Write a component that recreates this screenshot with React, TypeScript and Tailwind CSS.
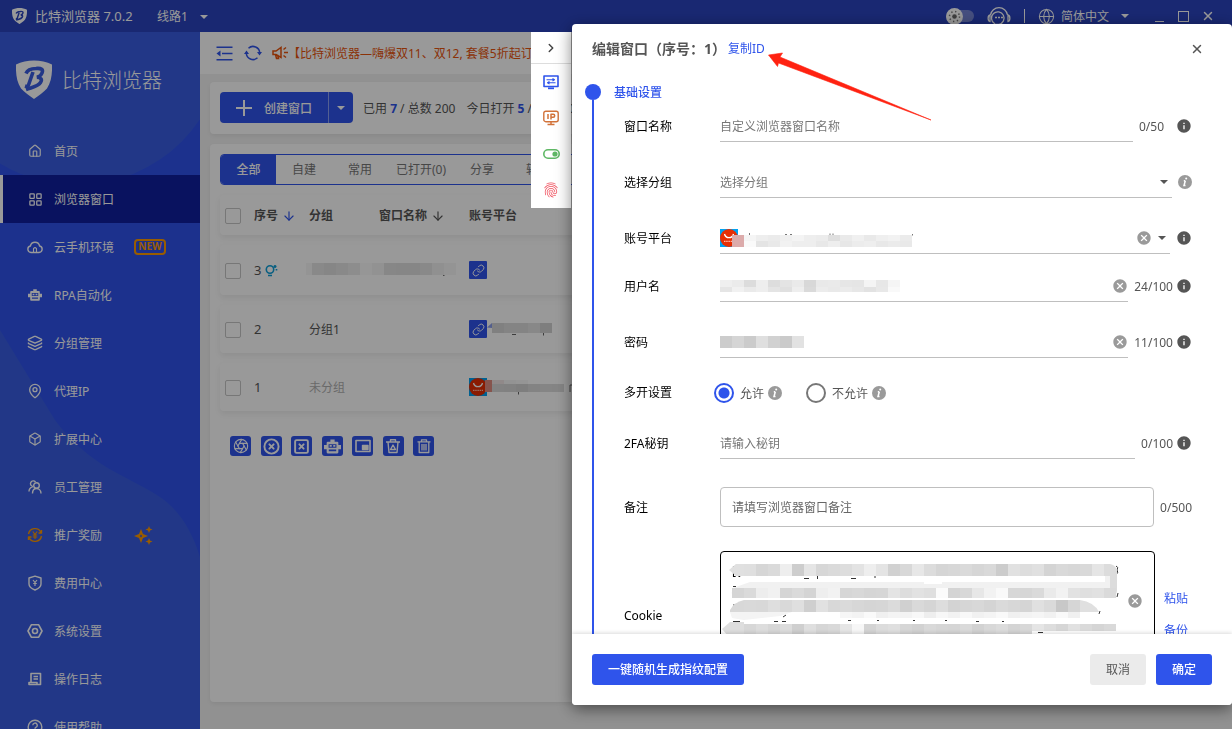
import { useState, type ReactNode } from "react";
import {
  Aperture,
  ArrowDown,
  Box,
  ChevronRight,
  CircleX,
  Globe,
  House,
  Layers,
  LayoutGrid,
  Link,
  MapPin,
  SquareX,
  X,
} from "lucide-react";
import { MdCancel, MdFingerprint, MdInfo } from "react-icons/md";

/* ---------- small drawings ---------- */

const Svg = ({ size = 16, className, children }: { size?: number; className?: string; children: ReactNode }) => (
  <svg
    width={size}
    height={size}
    viewBox="0 0 16 16"
    fill="none"
    stroke="currentColor"
    strokeWidth="1.4"
    strokeLinejoin="round"
    className={className}
    aria-hidden="true"
  >
    {children}
  </svg>
);

const Logo = ({ className, hole }: { className: string; hole: string }) => (
  <svg viewBox="0 0 36 38" className={className} aria-hidden="true">
    <path d="M18 0C24 0 31 1.200 36 4C36.300 13 35.500 21 31 28C27.500 32 22.500 35 18 38.500C13.500 35 8.500 32 5 28C0.500 21 -0.300 13 0 4C5 1.200 12 0 18 0Z" fill="#fff" />
    <path
      d="M10 13C11.500 9 16 8 20 8C25.500 7.500 27.500 9 26 12.500C25.200 14.800 23.500 16 21 16.800C25 17 26.500 19 24.500 22C22 26 17 26.500 10 29M17 11.500L12.500 24.500C12 26 10.500 26 9 25.500"
      fill="none"
      stroke={hole}
      strokeWidth="3.600"
    />
  </svg>
);

const Caret = ({ className }: { className?: string }) => (
  <svg width="8" height="4" viewBox="0 0 8 4" className={className} aria-hidden="true">
    <path d="M0 0h8L4 4z" fill="currentColor" />
  </svg>
);

const RobotIcon = ({ size = 16 }: { size?: number }) => (
  <svg width={size} height={size} viewBox="0 0 16 16" fill="currentColor" aria-hidden="true">
    <path
      fillRule="evenodd"
      d="M6 1.500h4v2h2.500q1 0 1 1V6.500H16v4h-2.500v3q0 1-1 1h-9q-1 0-1-1v-3H0v-4h2.500V4.500q0-1 1-1H6zM4.300 5.800v3.400h7.400V5.800zM4.500 10.800v1.600h7v-1.600z"
    />
    <path d="M5.300 6.700h2v1.600h-2zM8.700 6.700h2v1.600h-2z" />
  </svg>
);

const CloudHomeIcon = () => (
  <Svg>
    <path d="M4 13.500a3.300 3.300 0 0 1-.6-6.500 4.700 4.700 0 0 1 9.200 0 3.300 3.300 0 0 1-.6 6.500z" />
    <path d="M6.500 13.500V9.500L8 8.500l1.500 1v4" strokeWidth="1.100" />
  </Svg>
);

const StaffIcon = () => (
  <Svg>
    <circle cx="9.500" cy="6.500" r="2.800" />
    <path d="M5.500 14.500c0-3 1.500-5 4-5s4.500 2 4.500 5M6 7.500A2.800 2.800 0 1 1 8.500 3M2 12.500c0-2.500 1-4 3.500-4.700" />
  </Svg>
);

const YenCycleIcon = () => (
  <Svg>
    <path d="M1.500 7A6.600 6.600 0 0 1 14 5.500M14.500 9A6.600 6.600 0 0 1 2 10.500M14.500 3v3h-3M1.500 13v-3h3" />
    <path d="M5.800 4.500L8 7.500l2.200-3M8 7.500V12M5.800 8h4.400M5.800 10h4.400" strokeWidth="1.100" />
  </Svg>
);

const ShieldYenIcon = () => (
  <Svg>
    <path d="M8 1.200L14 3v6c0 3-3 4.800-6 6-3-1.200-6-3-6-6V3z" />
    <path d="M6 5l2 2.500L10 5M8 7.500V11M6.200 8.500h3.600" strokeWidth="1.200" />
  </Svg>
);

const NutIcon = () => (
  <Svg>
    <path d="M4.300 1.800h7.400L15 8l-3.300 6.200H4.300L1 8z" strokeWidth="1.600" />
    <circle cx="8" cy="8" r="2.500" strokeWidth="1.600" />
  </Svg>
);

const LogIcon = () => (
  <Svg>
    <path d="M4 11V2.500h9.500v11H4M6.500 5.500H11M6.500 8H11M2 13.500V11.500h8v2z" strokeWidth="1.600" />
  </Svg>
);

const HelpIcon = () => (
  <Svg>
    <circle cx="8" cy="8" r="6.800" />
    <path d="M5.800 6.300a2.200 2.200 0 1 1 3.300 1.900c-.8.4-1.100.8-1.100 1.600M8 11v1.500" />
  </Svg>
);

const SparkleIcon = () => (
  <svg width="19" height="19" viewBox="0 0 19 19" fill="#ff9900" aria-hidden="true">
    <path fillRule="evenodd" d="M7 3l2 5 5 2-5 2-2 5-2-5-5-2 5-2zM7 8.500L5.800 10 7 11.500 8.200 10z" />
    <path d="M15 0l1 2.500L18.500 3.500 16 4.500 15 7l-1-2.500-2.500-1L14 2.500zM15 12l1 2.500 2.500 1-2.500 1-1 2.500-1-2.500-2.500-1 2.500-1z" />
  </svg>
);

const IndentIcon = () => (
  <svg width="17" height="15" viewBox="0 0 17 15" fill="none" stroke="#2f54eb" strokeWidth="1.600" aria-hidden="true">
    <path d="M0.500 1.200h16M6 7.500h10.500M0.500 13.800h16" />
    <path d="M4.500 4.500v6L0.500 7.500z" fill="#2f54eb" stroke="none" />
  </svg>
);

const RefreshIcon = () => (
  <svg width="18" height="16" viewBox="0 0 18 16" fill="none" stroke="#2f54eb" strokeWidth="1.500" aria-hidden="true">
    <path d="M4.500 3.200A6.700 6.700 0 0 1 15.700 8M2.300 8A6.700 6.700 0 0 0 13.500 12.800" />
    <path d="M13 7h5l-2.500 3.500zM0 9h5L2.500 5.500z" fill="#2f54eb" stroke="none" />
  </svg>
);

const MegaphoneIcon = () => (
  <svg width="16" height="14" viewBox="0 0 16 14" fill="none" stroke="#e8540c" strokeWidth="1.500" aria-hidden="true">
    <path d="M1 5h3l5-3.500v10L4 8.500H1zM3.500 8.500l1 4h2l-1-3.500M11.500 3.500L14 1.500M12 6.500h4M11.500 9.500l2.500 2" />
  </svg>
);

const HeadsetIcon = () => (
  <svg width="24" height="18" viewBox="0 0 24 18" fill="none" stroke="#fff" strokeWidth="1.300" aria-hidden="true">
    <path d="M3.500 8a8.600 8.600 0 0 1 17 0M3 8v6.500C.5 14 .5 8.500 3 8zM21 8v6.500c2.500-.5 2.500-6 0-6.500z" />
    <path d="M7.500 16.500A6.300 6.300 0 1 1 12 17.300H7.500z" />
    <path d="M8 10.500h2M11 10.500h2M14 10.500h2" strokeWidth="1.600" />
  </svg>
);

const PlatformLogo = () => (
  <g>
    <rect width="18" height="18" fill="#00a2f2" />
    <circle cx="9" cy="9" r="9" fill="#e62e04" />
    <path d="M4.500 5a4.600 4.600 0 0 0 9 0" fill="none" stroke="#fff" strokeWidth="1.300" />
    <path d="M4 12.300h10" stroke="#ffb8a8" strokeWidth="1.200" strokeDasharray="1.500 .7" />
  </g>
);

const ItalicInfo = () => (
  <svg width="14" height="14" viewBox="0 0 14 14" aria-hidden="true">
    <circle cx="7" cy="7" r="7" fill="#9a9a9a" />
    <path d="M7.300 5.800L6 10.500h1.500M5.800 5.800h1.500" stroke="#fff" strokeWidth="1.500" fill="none" />
    <circle cx="8.200" cy="3.500" r="1" fill="#fff" />
  </svg>
);

/* Row of grey tiles that hides private values */
const Tiles = ({ x = 0, y = 0, w = 12, h = 12, colors }: { x?: number; y?: number; w?: number; h?: number; colors: string[] }) => (
  <g>
    {colors.map((c, i) => (
      <rect key={i} x={x + i * w} y={y} width={w} height={h} fill={c} />
    ))}
  </g>
);

/* ---------- sidebar ---------- */

const menu = [
  { label: "首页", icon: <House size={14} /> },
  { label: "浏览器窗口", icon: <LayoutGrid size={15} />, active: true },
  { label: "云手机环境", icon: <CloudHomeIcon />, badge: "new" },
  { label: "RPA自动化", icon: <RobotIcon size={14} /> },
  { label: "分组管理", icon: <Layers size={16} /> },
  { label: "代理IP", icon: <MapPin size={16} /> },
  { label: "扩展中心", icon: <Box size={14} /> },
  { label: "员工管理", icon: <StaffIcon /> },
  { label: "推广奖励", icon: <YenCycleIcon />, badge: "spark" },
  { label: "费用中心", icon: <ShieldYenIcon /> },
  { label: "系统设置", icon: <NutIcon /> },
  { label: "操作日志", icon: <LogIcon /> },
  { label: "使用帮助", icon: <HelpIcon /> },
];

const Sidebar = () => (
  <aside className="relative w-[200px] shrink-0 overflow-hidden bg-[#2f53ec] text-white">
    <svg className="absolute left-0 top-0" width="200" height="697" viewBox="0 32 200 697" aria-hidden="true">
      <circle cx="77" cy="37" r="148" fill="#395de2" />
      <path d="M0 330L55 420C70 440 84 452 100 463C120 476 140 484 160 497C178 509 192 530 200 557V729H0Z" fill="#395de2" />
    </svg>
    <div className="relative flex h-[95px] items-center gap-[10px] pl-4">
      <Logo className="h-[39px] w-9" hole="#395de2" />
      <span className="pt-0.5 text-xl font-light">比特浏览器</span>
    </div>
    <nav className="relative">
      {menu.map((item) => (
        <a
          key={item.label}
          href="#"
          className={
            item.active
              ? "flex h-12 items-center border-l-[3px] border-white bg-[#101f9e] pl-6"
              : "flex h-12 items-center border-l-[3px] border-transparent pl-6"
          }
        >
          <span className={item.badge === "spark" ? "flex w-4 justify-center text-[#ff9900]" : "flex w-4 justify-center"}>
            {item.icon}
          </span>
          <span className="ml-[11px] w-20 pt-0.5">{item.label}</span>
          {item.badge === "new" && (
            <span className="flex h-4 w-8 items-center justify-center rounded-sm border-2 border-[#ff9900] text-[10px] font-bold text-[#ff9900]">
              NEW
            </span>
          )}
          {item.badge === "spark" && <SparkleIcon />}
        </a>
      ))}
    </nav>
  </aside>
);

/* ---------- title bar ---------- */

const TitleBar = () => (
  <header className="flex h-8 shrink-0 items-center bg-[#2a43be] pl-3 pr-[17px] text-white">
    <Logo className="h-4 w-[15px]" hole="#2a43be" />
    <span className="ml-2 w-[122px] pt-0.5 text-[13px]">比特浏览器 7.0.2</span>
    <button className="flex items-center gap-3 pt-0.5">
      线路1 <Caret />
    </button>
    <div className="ml-auto flex items-center">
      <button aria-label="主题" className="flex h-3 w-7 items-center rounded-full bg-[#7484d4]">
        <svg width="17" height="17" viewBox="0 0 17 17" className="shrink-0" aria-hidden="true">
          <circle cx="8.500" cy="8.500" r="8.500" fill="#fff" />
          <circle cx="8.500" cy="8.500" r="2.300" fill="#666" />
          <circle cx="8.500" cy="8.500" r="5" fill="none" stroke="#777" strokeWidth="1.500" strokeDasharray="1.300 2.630" />
        </svg>
      </button>
      <button aria-label="客服" className="ml-[13px]">
        <HeadsetIcon />
      </button>
      <span className="mx-[13px] h-[14px] w-px bg-white" />
      <button className="flex items-center">
        <Globe size={17} strokeWidth={1.5} />
        <span className="ml-1.5 pt-0.5">简体中文</span>
        <Caret className="ml-3" />
      </button>
      <button aria-label="最小化" className="ml-[26px] flex h-[11px] w-[9px] items-end">
        <span className="h-px w-full bg-white" />
      </button>
      <button aria-label="最大化" className="ml-[14px] h-[11px] w-[11px] border border-white" />
      <button aria-label="关闭窗口" className="ml-3">
        <X size={14} strokeWidth={2.5} />
      </button>
    </div>
  </header>
);

/* ---------- browser list ---------- */

const tabs = ["全部", "自建", "常用", "已打开(0)", "分享", "转移"];

const bulkActions = [
  { label: "打开", icon: <Aperture size={16} strokeWidth={1.7} /> },
  { label: "关闭", icon: <CircleX size={17} strokeWidth={2.7} /> },
  { label: "强制关闭", icon: <SquareX size={17} strokeWidth={2.7} /> },
  { label: "RPA", icon: <RobotIcon size={17} /> },
  {
    label: "排列",
    icon: (
      <Svg>
        <path d="M1 2.500h14v11H1z" strokeWidth="1.600" />
        <path d="M7.500 7.500H13v4H7.500z" fill="currentColor" />
      </Svg>
    ),
  },
  {
    label: "清理",
    icon: (
      <Svg>
        <path d="M1 4h14M5.500 4V1.800h5V4M3 4l1 10.500h8L13 4M8 7l2.500 4.500h-5z" />
      </Svg>
    ),
  },
  {
    label: "删除",
    icon: (
      <Svg>
        <path d="M1.500 3.800h13M5.500 3.800V1.800h5v2M3.200 3.800v10.700h9.600V3.800M6 6v6.500M8 6v6.500M10 6v6.500" strokeWidth="1.300" />
      </Svg>
    ),
  },
];

const LinkBadge = () => (
  <span className="flex h-[18px] w-[18px] items-center justify-center rounded-[1px] bg-[#2f54eb] text-white">
    <Link size={13} strokeWidth={1.8} />
  </span>
);

const RowCheck = ({ label }: { label: string }) => (
  <input
    type="checkbox"
    aria-label={label}
    className="block h-4 w-4 appearance-none rounded-xs border border-[#c6c6c6]"
  />
);

const rowClass = "rounded shadow-[0_3px_6px_rgba(0,0,0,0.07)]";

const BrowserTable = () => (
  <table className="w-full table-fixed border-separate border-spacing-x-0 border-spacing-y-[10px] text-left text-[#555]">
    <colgroup>
      <col className="w-[34px]" />
      <col className="w-[52px]" />
      <col className="w-[70px]" />
      <col className="w-[90px]" />
      <col />
    </colgroup>
    <thead>
      <tr className={rowClass}>
        <th className="h-10 pl-[5px] pt-0.5">
          <RowCheck label="全选" />
        </th>
        <th className="pt-0.5 font-bold">
          <span className="flex items-center gap-1">
            序号 <ArrowDown size={14} className="text-[#2f54eb]" />
          </span>
        </th>
        <th className="pl-[3px] pt-0.5 font-bold">分组</th>
        <th className="pl-[3px] pt-0.5 font-bold">
          <span className="flex items-center gap-1">
            窗口名称 <ArrowDown size={14} />
          </span>
        </th>
        <th className="pl-[3px] pt-0.5 font-bold">账号平台</th>
      </tr>
    </thead>
    <tbody>
      <tr className={rowClass}>
        <td className="h-[50px] pl-[5px] pt-0.5">
          <RowCheck label="3" />
        </td>
        <td className="pt-0.5">
          <span className="flex items-center gap-1 text-[13px]">
            3
            <svg width="13" height="13" viewBox="0 0 13 13" fill="none" stroke="#0f9fd8" strokeWidth="1.600" aria-hidden="true">
              <circle cx="5" cy="5.500" r="3.700" />
              <path d="M3 11.500h4M10 1v3M8.500 2.500h3M11.500 5v1.500" />
            </svg>
          </span>
        </td>
        <td colSpan={2}>
          <svg width="150" height="14" aria-hidden="true">
            <Tiles x={0} w={6} colors={["#f7f7f7"]} />
            <Tiles x={6} colors={["#e4e4e4", "#e0e0e0", "#e4e4e4", "#ebebeb", "#fafafa", "#f3f3f3", "#e2e2e2", "#e0e0e0", "#dfdfdf", "#e4e4e4", "#f0f0f0", "#f7f7f7"]} />
            <path d="M137 12.500h1.500" stroke="#777" />
          </svg>
        </td>
        <td className="pl-[3px]">
          <LinkBadge />
        </td>
      </tr>
      <tr className={rowClass}>
        <td className="h-12 pl-[5px] pt-0.5">
          <RowCheck label="2" />
        </td>
        <td className="pt-0.5 text-[13px]">2</td>
        <td className="pl-[3px] pt-0.5">分组1</td>
        <td />
        <td className="pl-[3px]">
          <span className="flex items-center">
            <LinkBadge />
            <svg width="66" height="14" aria-hidden="true">
              <path d="M0 5.500L5 1v5z" fill="#8d9eea" />
              <Tiles x={5} y={1} h={10} colors={["#d6d6d6", "#dddddd", "#dcdcdc", "#e3e3e3", "#d3d3d3"]} />
              <path d="M25 12.500h4M56.500 11v2.500" stroke="#666" />
            </svg>
          </span>
        </td>
      </tr>
      <tr className={rowClass}>
        <td className="h-12 pl-[5px] pt-0.5">
          <RowCheck label="1" />
        </td>
        <td className="pt-0.5 text-[13px]">1</td>
        <td className="pl-[3px] pt-0.5 text-[#b0b0b0]">未分组</td>
        <td />
        <td className="pl-[3px]">
          <svg width="110" height="18" aria-hidden="true">
            <PlatformLogo />
            <Tiles x={16} y={2} w={7} colors={["#e08c80"]} />
            <Tiles x={23} y={2} h={4} colors={["#f0e5e5", "#f5f5f5", "#f8f8f8"]} />
            <Tiles x={23} y={6} h={8} colors={["#d9d9d9", "#d7d7d7", "#d2d2d2", "#dadada", "#dedede", "#dddddd"]} />
            <rect x="95" y="2" width="5" height="12" fill="#fff" />
            <path d="M49.500 14v2.500M101 14V7h4" stroke="#666" fill="none" />
          </svg>
        </td>
      </tr>
    </tbody>
  </table>
);

const MainPage = () => (
  <main className="flex min-w-0 flex-1 flex-col bg-[#f2f2f2] text-[#555]">
    <div className="flex h-[42px] shrink-0 items-center whitespace-nowrap bg-white pl-4">
      <button aria-label="收起菜单">
        <IndentIcon />
      </button>
      <button aria-label="刷新" className="ml-[11px]">
        <RefreshIcon />
      </button>
      <span className="ml-[10px] flex items-center text-[#e8540c]">
        <MegaphoneIcon />
        <span className="pt-0.5">【比特浏览器—嗨爆双11、双12, 套餐5折起订购】</span>
      </span>
    </div>

    <section className="mx-[10px] mt-2 flex shrink-0 items-center whitespace-nowrap rounded bg-white p-[10px] pb-[11px] shadow-[0_2px_4px_rgba(0,0,0,0.06)]">
      <div className="flex h-[31px] rounded bg-[#2f54eb] text-white">
        <button className="flex w-[108px] items-center gap-[11px] pl-[15px] font-medium">
          <svg width="18" height="18" viewBox="0 0 18 18" stroke="#fff" strokeWidth="2" aria-hidden="true">
            <path d="M9 1v16M1 9h16" />
          </svg>
          <span className="pt-0.5">创建窗口</span>
        </button>
        <button aria-label="更多" className="flex w-[25px] items-center justify-center border-l border-[#8ca0f3]">
          <Caret />
        </button>
      </div>
      <span className="ml-[10px] pt-0.5">
        已用 <b className="text-[#2f54eb]">7</b> / 总数 200
      </span>
      <span className="ml-[11px] pt-0.5">
        今日打开 <b className="text-[#2f54eb]">5</b> / 总数 50
      </span>
    </section>

    <section className="mx-[10px] mb-[27px] mt-[10px] flex-1 rounded bg-white p-[10px] shadow-[0_2px_4px_rgba(0,0,0,0.06)]">
      <div className="flex h-[31px] overflow-hidden rounded border border-[#2f54eb]">
        {tabs.map((tab, i) => (
          <button
            key={tab}
            className={
              i === 0
                ? "w-[55px] bg-[#2f54eb] font-medium text-white"
                : tab.length > 2
                  ? "px-2 text-[#777]"
                  : "w-14 text-[#777]"
            }
          >
            {tab}
          </button>
        ))}
      </div>
      <BrowserTable />
      <div className="ml-[10px] mt-[15px] flex w-[204px] justify-between">
        {bulkActions.map((action) => (
          <button
            key={action.label}
            aria-label={action.label}
            className="flex h-5 w-[21px] items-center justify-center rounded-[3px] bg-[#2f54eb] text-white"
          >
            {action.icon}
          </button>
        ))}
      </div>
    </section>
  </main>
);

/* ---------- edit dialog ---------- */

const SideTools = () => (
  <div className="mr-px mt-2 flex h-44 w-10 shrink-0 flex-col items-center bg-white">
    <button aria-label="收起" className="flex h-8 w-full items-center justify-center border-b border-[#ddd] text-[#444]">
      <ChevronRight size={14} strokeWidth={2.5} />
    </button>
    <button aria-label="基础设置" className="flex h-9 items-center text-[#2f54eb]">
      <Svg>
        <path d="M1 2h14v10.500H1z" strokeWidth="1.600" />
        <path d="M3.500 5.800h8M4.500 8.800h8M9.500 4.500l2 1.300-2 1.300M6.500 7.500l-2 1.300 2 1.300" strokeWidth="1.100" />
        <path d="M5 14.300h6" strokeWidth="1.800" />
      </Svg>
    </button>
    <button aria-label="代理IP" className="flex h-9 items-center text-[#d2733a]">
      <Svg>
        <rect x="0.800" y="1.200" width="14.400" height="10.500" rx="2" />
        <path d="M5 4v5M8 9.500V4.300h2.200a1.500 1.500 0 0 1 0 3H8M8 12v2.500M4.500 14.500h7" strokeWidth="1.500" />
      </Svg>
    </button>
    <button aria-label="开关" className="flex h-9 items-center text-[#5fb865]">
      <svg width="17" height="10" viewBox="0 0 17 10" aria-hidden="true">
        <rect x="0.800" y="0.800" width="15.400" height="8.400" rx="4.200" fill="none" stroke="currentColor" strokeWidth="1.600" />
        <circle cx="12" cy="5" r="2.600" fill="currentColor" />
      </svg>
    </button>
    <button aria-label="指纹" className="flex h-9 items-center text-[#f0525f]">
      <MdFingerprint size={18} />
    </button>
  </div>
);

const Row = ({ label, id, className, children }: { label: string; id: string; className: string; children: ReactNode }) => (
  <div className={`flex items-center ${className}`}>
    <label htmlFor={id} className="w-24 shrink-0 pt-0.5 text-black">
      {label}
    </label>
    {children}
  </div>
);

const line = "flex h-8 min-w-0 flex-1 items-center border-b border-[#bfbfbf]";
const input = "h-full min-w-0 flex-1 bg-transparent pt-0.5 text-[#555] outline-none placeholder:text-[#777]";

const Clear = () => (
  <button aria-label="清除" className="block shrink-0 text-[#9a9a9a]">
    <MdCancel size={16} />
  </button>
);

const Info = () => <MdInfo size={16} className="shrink-0 text-[#555]" />;

const EditDialog = () => {
  const [multi, setMulti] = useState("allow");
  const radio =
    "relative h-5 w-5 shrink-0 appearance-none rounded-full border-2 border-[#777] checked:border-[#2f54eb] checked:bg-[radial-gradient(circle,#2f54eb_5px,transparent_6px)]";

  return (
    <div
      role="dialog"
      aria-label="编辑窗口"
      className="relative flex w-[660px] flex-col overflow-hidden rounded bg-white text-[#555] shadow-[0_4px_16px_rgba(0,0,0,0.5)]"
    >
      <div className="flex h-[50px] shrink-0 items-center pl-5 pr-7">
        <h2 className="text-sm font-bold">编辑窗口（序号：1）</h2>
        <a href="#" className="ml-0.5 text-[#2f54eb]">
          复制ID
        </a>
        <button aria-label="关闭" className="ml-auto">
          <X size={14} strokeWidth={2.5} />
        </button>
      </div>

      <div className="flex min-h-0 flex-1 overflow-y-auto pl-[13px] pr-10 pt-[10px] [scrollbar-width:none]">
        {/* timeline */}
        <div className="flex h-[620px] w-4 flex-col items-center">
          <span className="h-4 w-4 shrink-0 rounded-full bg-[#2f54eb]" />
          <span className="w-0.5 flex-1 bg-[#2f54eb]" />
        </div>
        <form className="ml-[13px] min-w-0 flex-1" onSubmit={(e) => e.preventDefault()}>
          <h3 className="h-4 font-medium leading-[18px] text-[#2f54eb]">基础设置</h3>
          <div className="pl-[10px]">
            <Row label="窗口名称" id="name" className="mt-[10px]">
              <div className={line}>
                <input id="name" className={input} placeholder="自定义浏览器窗口名称" />
              </div>
              <span className="ml-1.5 mr-3 pt-0.5">0/50</span>
              <Info />
            </Row>
            <Row label="选择分组" id="group" className="mt-6">
              <div className={line}>
                <select id="group" className="h-full min-w-0 flex-1 appearance-none bg-transparent pt-0.5 text-[#777] outline-none">
                  <option>选择分组</option>
                </select>
                <Caret className="mr-1" />
              </div>
              <span className="ml-1.5">
                <ItalicInfo />
              </span>
            </Row>
            <Row label="账号平台" id="platform" className="mt-6">
              <div className={line}>
                <svg width="200" height="18" className="shrink-0" aria-hidden="true">
                  <PlatformLogo />
                  <path d="M29.500 4v2M65 5.500h2M70 5.500h2M110 4.500v1.500M113 4.500v1.500M192.500 5v1.500" stroke="#777" />
                  <Tiles x={12} y={6} colors={["#dcabab"]} />
                  <Tiles x={24} y={6} h={6} colors={["#f5f5f5", "#eeeeee", "#ebebeb", "#f0f0f0", "#f4f4f4", "#eeeeee", "#ececec", "#dfdfdf", "#eaeaea", "#f0f0f0", "#e9e9e9", "#efefef", "#f2f2f2", "#ebebeb"]} />
                  <Tiles x={24} y={12} h={6} colors={["#fafafa", "#e4e4e4", "#e9e9e9", "#f2f2f2", "#eeeeee", "#eeeeee", "#e8e8e8", "#eeeeee", "#e7e7e7", "#ececec", "#eeeeee", "#e8e8e8", "#ebebeb", "#e9e9e9"]} />
                </svg>
                <input id="platform" className={input} />
                <Clear />
                <Caret className="ml-1.5 mr-1" />
              </div>
              <span className="ml-1.5">
                <Info />
              </span>
            </Row>
            <Row label="用户名" id="user" className="mt-4">
              <div className={line}>
                <svg width="180" height="12" className="shrink-0" aria-hidden="true">
                  <Tiles h={7} colors={["#efefef", "#ebebeb", "#dcdcdc", "#eeeeee", "#dddddd", "#e4e4e4", "#eaeaea", "#d8d8d8", "#e9e9e9", "#eaeaea", "#e6e6e6", "#e5e5e5", "#f4f4f4", "#e7e7e7", "#f5f5f5"]} />
                  <Tiles y={7} h={5} colors={["#e5e5e5", "#f1f1f1", "#eaeaea", "#eeeeee", "#e4e4e4", "#e0e0e0", "#eeeeee", "#dadada", "#ececec", "#e9e9e9", "#ebebeb", "#e7e7e7", "#e2e2e2", "#e8e8e8", "#f9f9f9"]} />
                </svg>
                <input id="user" className={input} />
                <Clear />
              </div>
              <span className="ml-1.5 mr-[3px] pt-0.5">24/100</span>
              <Info />
            </Row>
            <Row label="密码" id="password" className="mt-6">
              <div className={line}>
                <svg width="92" height="12" className="shrink-0" aria-hidden="true">
                  <Tiles colors={["#cccccc", "#d5d5d5", "#cbcbcb", "#dfdfdf", "#d1d1d1", "#cacaca", "#e2e2e2"]} />
                </svg>
                <input id="password" className={input} />
                <Clear />
              </div>
              <span className="ml-1.5 mr-[3px] pt-0.5">11/100</span>
              <Info />
            </Row>
            <Row label="多开设置" id="allow" className="mt-[18px] h-8">
              <div className="-ml-1.5 flex items-center pt-0.5">
                <input id="allow" type="radio" name="multi" className={radio} checked={multi === "allow"} onChange={() => setMulti("allow")} />
                <label htmlFor="allow" className="ml-1.5 mr-1 pt-0.5">
                  允许
                </label>
                <ItalicInfo />
                <input id="deny" type="radio" name="multi" className={`ml-6 ${radio}`} checked={multi === "deny"} onChange={() => setMulti("deny")} />
                <label htmlFor="deny" className="ml-1.5 mr-1 pt-0.5">
                  不允许
                </label>
                <ItalicInfo />
              </div>
            </Row>
            <Row label="2FA秘钥" id="secret" className="mt-[19px]">
              <div className={line}>
                <input id="secret" className={input} placeholder="请输入秘钥" />
              </div>
              <span className="ml-1.5 mr-[3px] pt-0.5">0/100</span>
              <Info />
            </Row>
            <Row label="备注" id="remark" className="mt-7">
              <input
                id="remark"
                className="h-10 min-w-0 flex-1 rounded border border-[#bfbfbf] px-[11px] outline-none placeholder:text-[#666]"
                placeholder="请填写浏览器窗口备注"
              />
              <span className="ml-1.5 pt-0.5">0/500</span>
            </Row>
            <Row label="Cookie" id="cookie" className="mt-6">
              <div className="relative h-32 min-w-0 flex-1">
                <textarea
                  id="cookie"
                  className="block h-full w-full resize-none rounded border border-black py-[9px] pl-[11px] pr-9 leading-5 text-black outline-none"
                  defaultValue="[{"
                />
                {/* mask painted over the cookie text */}
                <svg className="pointer-events-none absolute left-0 top-0" width="436" height="86" aria-hidden="true">
                  <g transform="translate(0 -3)">
                    <path d="M84 30.500h5M131 30.500h5M97.500 29v3M155 29v3M396 18q3 1 1 4q2 2-1 5M13 38.500h3M240 36h3M250 36h4M258 36h5M295 36h3M318 35.500h5M330 35.500h18M354 35.500h22M398 45l-1 4M380 63l-1 3M14 56v3M17.500 56v3M63 69l3-2M13 73.500h7M54 73.500h4M62 73.500h4M128 72.500h3M157 72.500h2M193 72.500h2M225 72.500h2M256 73.500h3M282 73.500h2M318 84.500h5" fill="none" stroke="#333" />
                    <path d="M11 21L16 16H390Q397 17 397 23V43Q396 50 386 50H14Q10 46 13 40L30 34H385V28H16z" fill="#f1f1f1" />
                    <path d="M17 28H385V34H222V36H204V34H72V28z" fill="#fff" />
                    <path d="M84 30.500h5M131 30.500h5M97.500 28v3M155 28v2" fill="none" stroke="#333" />
                    <path d="M9 22L16 16H24V28H16z" fill="#e0e0e0" />
                    <Tiles x={24} y={16} colors={["#dfdfdf", "#d6d6d6", "#dadada", "#eeeeee", "#cdcdcd", "#e5e5e5", "#d7d7d7", "#dadada", "#dddddd", "#e3e3e3", "#eeeeee", "#e4e4e4", "#d1d1d1", "#d8d8d8", "#e7e7e7", "#dcdcdc", "#d5d5d5", "#d7d7d7", "#dadada", "#d6d6d6", "#d9d9d9", "#cccccc", "#e1e1e1", "#dddddd", "#e0e0e0", "#d4d4d4", "#d9d9d9", "#d7d7d7", "#d9d9d9", "#e5e5e5"]} />
                    <path d="M384 16H390Q397 18 397 24V43Q396 49 390 50V28H384z" fill="#dcdcdc" />
                    <Tiles x={12} y={40} h={10} colors={["#d5d5d5", "#dadada", "#ededed", "#f1f1f1", "#d5d5d5", "#dadada", "#d4d4d4", "#eeeeee", "#f2f2f2", "#d6d6d6", "#d8d8d8", "#d5d5d5", "#d6d6d6", "#e4e4e4", "#dddddd", "#e2e2e2", "#dfdfdf", "#fbfbfb", "#d4d4d4", "#d8d8d8", "#e7e7e7", "#f2f2f2", "#f9f9f9", "#d7d7d7", "#d6d6d6", "#dadada", "#eaeaea", "#f2f2f2", "#e2e2e2", "#dfdfdf", "#e1e1e1", "#dadada"]} />
                    <path d="M10 62Q14 54 24 52V64H10z" fill="#d8d8d8" />
                    <Tiles x={24} y={52} colors={["#d9d9d9", "#d8d8d8", "#dedede", "#d9d9d9", "#dfdfdf", "#cfcfcf", "#e1e1e1", "#d8d8d8", "#dadada", "#d7d7d7", "#d5d5d5", "#d6d6d6", "#dbdbdb", "#d0d0d0", "#d9d9d9", "#d5d5d5", "#dddddd", "#d3d3d3", "#d6d6d6", "#d8d8d8", "#d4d4d4", "#dadada", "#d7d7d7", "#d5d5d5", "#e0e0e0", "#dadada", "#c8c8c8", "#d6d6d6"]} />
                    <path d="M360 52Q374 54 379 64H360z" fill="#e0e0e0" />
                    <path d="M10 64H72L60 68L24 72L12 70z" fill="#f4f4f4" />
                    <Tiles x={120} y={64} h={6} colors={["#f6f6f6", "#f3f3f3", "#fafafa", "#f0f0f0", "#f4f4f4", "#f3f3f3", "#f8f8f8", "#eeeeee", "#f7f7f7", "#f2f2f2", "#f8f8f8", "#f1f1f1", "#f4f4f4", "#f9f9f9", "#f0f0f0", "#f3f3f3", "#f5f5f5", "#f1f1f1", "#f9f9f9", "#f0f0f0"]} />
                    <path d="M2 81L10 74H24V88H8z" fill="#dedede" />
                    <Tiles x={24} y={76} colors={["#d7d7d7", "#dddddd", "#d7d7d7", "#dddddd", "#cfcfcf", "#dfdfdf", "#d6d6d6", "#d9d9d9", "#e6e6e6", "#f7f7f7", "#d4d4d4", "#dcdcdc", "#dfdfdf", "#d6d6d6", "#d2d2d2", "#d9d9d9", "#d6d6d6", "#d5d5d5", "#dadada", "#d2d2d2", "#d8d8d8", "#dcdcdc", "#d4d4d4", "#d8d8d8"]} />
                    <Tiles x={312} y={76} h={7} colors={["#e5e5e5", "#dddddd", "#d6d6d6", "#e1e1e1", "#dadada", "#d5d5d5", "#d9d9d9"]} />
                  </g>
                </svg>
                <span className="absolute right-3 top-[42px]">
                  <Clear />
                </span>
              </div>
              <div className="ml-[9px] mr-1 flex h-32 flex-col gap-[14px] pt-[39px] leading-[18px] text-[#2f54eb]">
                <a href="#">粘贴</a>
                <a href="#">备份</a>
              </div>
            </Row>
          </div>
        </form>
      </div>

      <div className="relative flex h-[71px] shrink-0 items-center bg-white px-5 shadow-[0_-1px_4px_rgba(0,0,0,0.15)]">
        <button className="h-[31px] rounded-[3px] bg-[#2f54eb] px-4 font-medium text-white">一键随机生成指纹配置</button>
        <button className="ml-auto h-[31px] w-14 rounded-[3px] bg-[#ebebeb]">取消</button>
        <button className="ml-[10px] h-[31px] w-14 rounded-[3px] bg-[#2f54eb] font-medium text-white">确定</button>
      </div>

      {/* pointer to the copy link */}
      <svg className="pointer-events-none absolute left-[196px] top-7" width="164" height="70" aria-hidden="true">
        <path d="M0.500 3L14.500 1L12 5L163 68L10.500 11L9.500 14.500Z" fill="#ff2211" stroke="#ff2211" strokeWidth="0.600" />
      </svg>
    </div>
  );
};

const App = () => (
  <div className="relative flex h-screen flex-col overflow-hidden font-['Noto_Sans','Noto_Sans_CJK_SC',sans-serif] text-xs">
    <TitleBar />
    <div className="flex min-h-0 flex-1">
      <Sidebar />
      <MainPage />
    </div>
    <div className="fixed inset-0 flex justify-end bg-black/40 py-6">
      <SideTools />
      <EditDialog />
    </div>
  </div>
);

export default App;
